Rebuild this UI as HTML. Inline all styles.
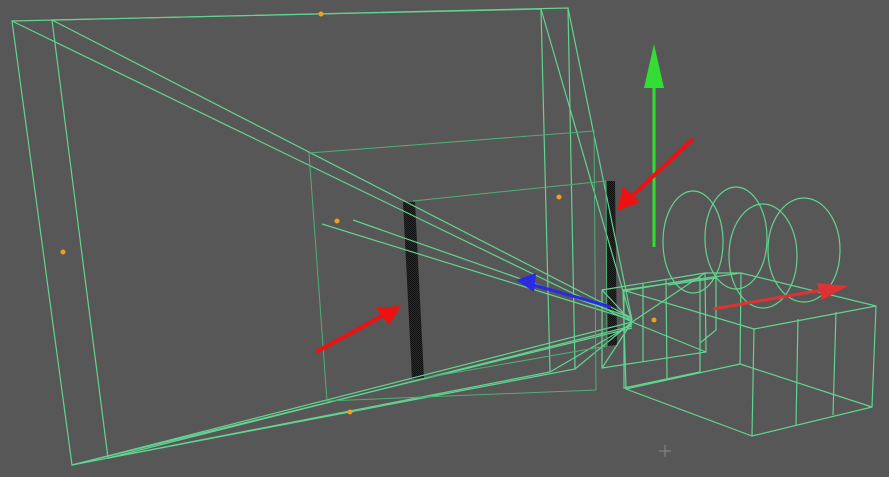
<!DOCTYPE html>
<html><head><meta charset="utf-8"><style>
html,body{margin:0;padding:0;background:#575757;width:889px;height:477px;overflow:hidden}
svg{display:block}
</style></head><body>
<svg width="889" height="477" viewBox="0 0 889 477" xmlns="http://www.w3.org/2000/svg">
<defs>
<pattern id="chk" width="2" height="2" patternUnits="userSpaceOnUse">
<rect width="2" height="2" fill="#2a2a2a"/><rect width="1" height="1" fill="#111"/><rect x="1" y="1" width="1" height="1" fill="#111"/>
</pattern>
</defs>
<rect width="889" height="477" fill="#575757"/>
<!-- dark bars -->
<polygon points="403,202 415,202 424,378 412,379" fill="url(#chk)"/>
<polygon points="606,181 615,181 617,345 607,346" fill="url(#chk)"/>
<g stroke="#63d391" stroke-width="1.2" fill="none">
<!-- outer frame -->
<polygon points="12,21 568,8 575,369 72,465"/>
<!-- inner frame -->
<polygon points="52,20 541,9 550,372 108,458"/>
<!-- diagonals from far corners -->
<line x1="12" y1="21" x2="632" y2="322"/>
<line x1="52" y1="20" x2="632" y2="318"/>
<line x1="568" y1="8" x2="632" y2="320"/>
<line x1="541" y1="9" x2="632" y2="322"/>
<line x1="72" y1="465" x2="632" y2="322"/>
<line x1="72" y1="465" x2="632" y2="328"/>
<line x1="108" y1="458" x2="632" y2="326"/>
<line x1="575" y1="369" x2="632" y2="322"/>
<line x1="550" y1="372" x2="632" y2="324"/>
<line x1="322" y1="224" x2="632" y2="320"/>
<line x1="353" y1="220" x2="632" y2="318"/>
</g>
<g stroke="#4fae78" stroke-width="1" fill="none">
<polygon points="309,153 594,131 596,390 327,401"/>
<line x1="413" y1="201" x2="606" y2="181"/>
<line x1="606" y1="181" x2="607" y2="346"/>
<line x1="424" y1="378" x2="607" y2="346"/>
</g>
<g stroke="#63d391" stroke-width="1.2" fill="none">
<!-- camera front parts -->
<polygon points="602,290 705,273 706,352 602,368"/>
<polygon points="624,291 700,278 700,372 624,388"/>
<line x1="643" y1="283" x2="643" y2="362"/>
<line x1="666" y1="280" x2="667" y2="380"/>
<polyline points="668,285 716,278 716,330 700,343"/>
<line x1="602" y1="290" x2="632" y2="322"/>
<line x1="602" y1="368" x2="632" y2="322"/>
<line x1="705" y1="273" x2="632" y2="322"/>
<line x1="706" y1="352" x2="632" y2="322"/>
<line x1="624" y1="388" x2="700" y2="372"/>
<!-- big box -->
<polygon points="741,273 876,306 872,407 752,436 626,389 623,290"/>
<line x1="754" y1="329" x2="876" y2="306"/>
<line x1="754" y1="329" x2="752" y2="436"/>
<line x1="623" y1="290" x2="754" y2="329"/>
<line x1="741" y1="273" x2="740" y2="364"/>
<line x1="740" y1="364" x2="626" y2="389"/>
<line x1="740" y1="364" x2="872" y2="407"/>
<line x1="798" y1="319" x2="796" y2="425"/>
<line x1="836" y1="312" x2="833" y2="415"/>
<line x1="705" y1="273" x2="741" y2="273"/>
<!-- reels -->
<ellipse cx="693" cy="242" rx="30" ry="51"/>
<ellipse cx="736" cy="238" rx="31" ry="51"/>
<ellipse cx="763" cy="256" rx="34" ry="52"/>
<ellipse cx="804" cy="250" rx="36" ry="52"/>
</g>
<!-- orange dots -->
<g fill="#f0a020">
<circle cx="321" cy="14" r="2.5"/><circle cx="63" cy="252" r="2.5"/>
<circle cx="337" cy="221" r="2.5"/><circle cx="559" cy="197" r="2.5"/>
<circle cx="350" cy="412" r="2.5"/><circle cx="654" cy="320" r="2.5"/>
</g>
<!-- green arrow -->
<line x1="654" y1="86" x2="654" y2="247" stroke="#33dd33" stroke-width="3"/>
<polygon points="654,44 644,88 664,88" fill="#33dd33"/>
<!-- blue arrow -->
<line x1="611" y1="307" x2="530" y2="284" stroke="#2a2ae0" stroke-width="3"/>
<polygon points="516,280 536,273 534,292" fill="#2a2ae0"/>
<!-- red axis arrow -->
<line x1="713" y1="309" x2="822" y2="290" stroke="#dd3333" stroke-width="3"/>
<polygon points="817,283 848,286 822,300" fill="#dd3333"/>
<!-- red arrows -->
<line x1="316" y1="352" x2="384" y2="315" stroke="#ee1111" stroke-width="4"/>
<polygon points="401,306 376,308 389,325" fill="#ee1111"/>
<line x1="693" y1="139" x2="632" y2="196" stroke="#ee1111" stroke-width="4"/>
<polygon points="617,211 623,186 640,202" fill="#ee1111"/>
<!-- cursor plus -->
<g stroke="#8a8a80" stroke-width="1"><line x1="659" y1="451" x2="671" y2="451"/><line x1="665" y1="445" x2="665" y2="457"/></g>
</svg>
</body></html>
